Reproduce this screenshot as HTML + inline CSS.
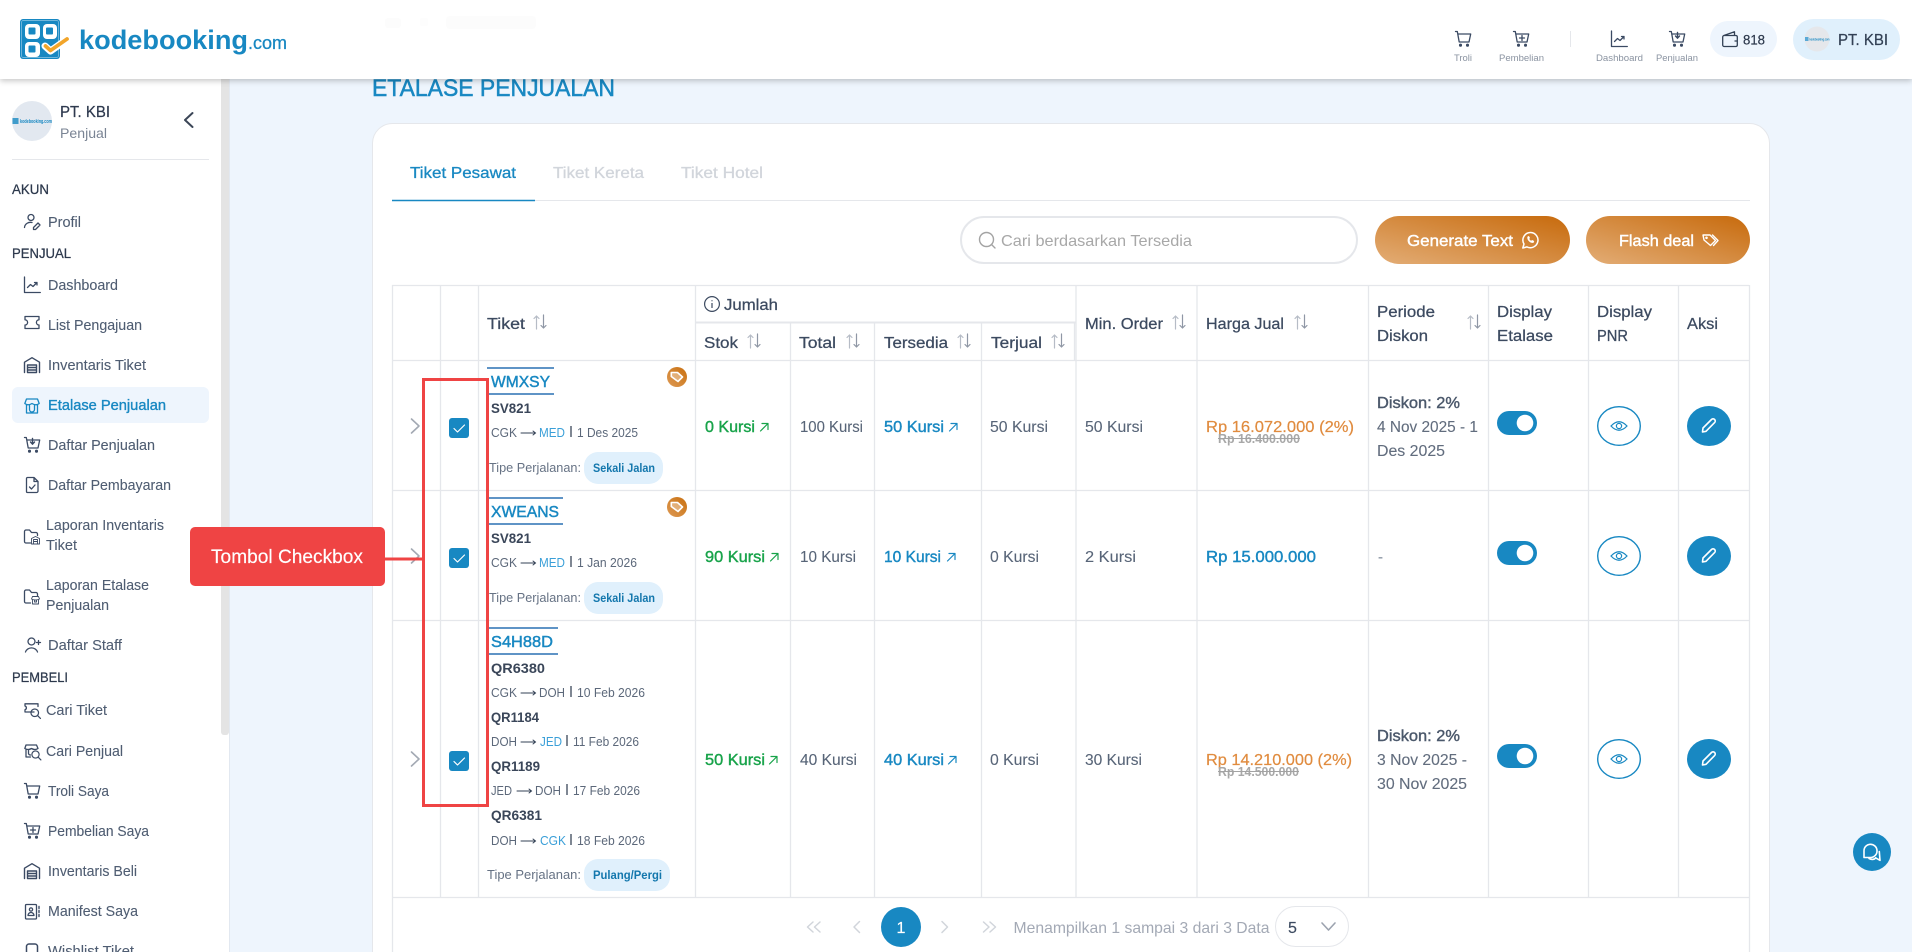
<!DOCTYPE html>
<html lang="id">
<head>
<meta charset="utf-8">
<title>Etalase Penjualan</title>
<style>
html,body{margin:0;padding:0;background:#eef5fd;width:1912px;height:952px;overflow:hidden}
svg{display:block}
text{font-family:"Liberation Sans",sans-serif;white-space:pre}
.ic{fill:none;stroke:#3b4a63;stroke-width:1.3;stroke-linecap:round;stroke-linejoin:round}
.grid line{stroke:#e5e7eb;stroke-width:1.3}
</style>
</head>
<body>
<svg width="1912" height="952" viewBox="0 0 1912 952" xmlns="http://www.w3.org/2000/svg">
<defs>
<linearGradient id="btn" x1="0" y1="1" x2="1" y2="0"><stop offset="0" stop-color="#e3ad76"/><stop offset="1" stop-color="#c76a0c"/></linearGradient>
<linearGradient id="tagc" x1="0" y1="1" x2="1" y2="0"><stop offset="0" stop-color="#dd9a55"/><stop offset="1" stop-color="#c9700f"/></linearGradient>
<filter id="hs" x="-5%" y="-20%" width="110%" height="150%"><feDropShadow dx="0" dy="2" stdDeviation="3" flood-color="#000" flood-opacity=".22"/></filter>
<g id="sort" fill="none" stroke-width="1.2" stroke-linecap="round" stroke-linejoin="round"><path d="M3.5 14V1M1 3.5L3.5 1L6 3.5" stroke="#b6bcc6"/><path d="M10.5 0V13M8 10.5L10.5 13L13 10.5" stroke="#8f97a5"/></g>
<g id="ne" fill="none" stroke-width="1.2" stroke-linecap="round" stroke-linejoin="round"><path d="M.5 8L8 .5M2 .5H8V6.5"/></g>
<g id="arr" fill="none" stroke="#334155" stroke-width="1" stroke-linecap="round"><path d="M0 0H14.5M12 -2L14.5 0L12 2"/></g>
<g id="cart"><path d="M.5 .5H2.3L4.2 11H14L15.7 3H2.8"/><circle cx="5.5" cy="14.2" r=".9" fill="#3b4a63"/><circle cx="12.5" cy="14.2" r=".9" fill="#3b4a63"/></g>
<g id="dash"><path d="M.5 0V15.5H16.3M3.5 10.5L6.5 7.5L9 9.5L13 5.5M10.5 5.5H13V8"/></g>
<g id="tick"><path d="M1 1.5H15V4.8A2.6 2.6 0 0 0 15 10V13.5H1V10A2.6 2.6 0 0 0 1 4.8Z"/></g>
<g id="ware"><path d="M.5 15.5V5.2L8 .7L15.5 5.2V15.5M3.5 15.5V8H12.5V15.5ZM3.5 10.5H12.5M3.5 13H12.5" stroke-width="1.4"/></g>
<g id="shop"><path d="M.8 5.5L2.5 1H13.5L15.2 5.5Q12 8 8 5.5Q4 8 .8 5.5ZM2.5 7V15H13.5V7M5.5 7.5V11.5A2.5 2.5 0 0 0 10.5 11.5V7.5"/></g>
<g id="wt"><circle cx="5" cy="5" r="4"/><path d="M8 8L11 11"/></g>
<g id="pencil" fill="none" stroke="#fff" stroke-width="1.6" stroke-linejoin="round" stroke-linecap="round"><path d="M1.5 15L2 11L10.5 2.5A2.1 2.1 0 0 1 13.6 5.6L5 14.3Z"/></g>
<g id="eye" fill="none" stroke="#1888c2" stroke-width="1.2"><path d="M-8 0Q0 -8.5 8 0Q0 8.5 -8 0Z"/><circle r="2.6"/></g>
<g id="tagi" fill="none" stroke-width="1.4" stroke-linejoin="round" stroke-linecap="round"><path d="M1 2H8L13.5 7.5L8.5 12.5L2 7Z"/><path d="M10.5 2L16 7.5L11.5 12.5"/><circle cx="4.5" cy="4.8" r=".6"/></g>
<g id="tagw"><circle r="10" fill="url(#tagc)"/><g transform="translate(-6.5,-5.5)" fill="none" stroke="#fff" stroke-width="1.6" stroke-linejoin="round"><path d="M.8 1H7L12 5.5L7.5 10L.8 5Z" fill="#fff" fill-opacity=".35"/></g></g>
<g id="cb"><rect width="20" height="20" rx="3" fill="#1888c2"/><path d="M5 10.5L8.5 14L15.5 7" fill="none" stroke="#fff" stroke-width="1.2" stroke-linecap="round" stroke-linejoin="round"/></g>
<g id="chev"><path d="M0 0L7.5 7L0 14" fill="none" stroke="#a3a9b3" stroke-width="1.6" stroke-linecap="round" stroke-linejoin="round"/></g>
</defs>

<!-- main background -->
<rect width="1912" height="952" fill="#eef5fd"/>
<line x1="229.5" y1="0" x2="229.5" y2="952" stroke="#e2e8f0"/>

<!-- title -->
<text x="372" y="96" font-size="24" fill="#1888c2" stroke="#1888c2" stroke-width=".5" textLength="243" lengthAdjust="spacingAndGlyphs">ETALASE PENJUALAN</text>

<!-- card -->
<path d="M372.5 960V143A20 20 0 0 1 392.5 123.5H1750A20 20 0 0 1 1769.5 143V960Z" fill="#fff" stroke="#e5e7eb"/>

<!-- tabs -->
<g font-size="16">
<text x="410" y="178" fill="#1888c2" stroke="#1888c2" stroke-width=".3" textLength="106" lengthAdjust="spacingAndGlyphs">Tiket Pesawat</text>
<text x="553" y="178" fill="#d1d5db" stroke="#d1d5db" stroke-width=".3" textLength="91" lengthAdjust="spacingAndGlyphs">Tiket Kereta</text>
<text x="681" y="178" fill="#d1d5db" stroke="#d1d5db" stroke-width=".3" textLength="82" lengthAdjust="spacingAndGlyphs">Tiket Hotel</text>
</g>
<line x1="392" y1="200.5" x2="1750" y2="200.5" stroke="#e5e7eb"/>
<line x1="392" y1="200.5" x2="535" y2="200.5" stroke="#1888c2" stroke-width="1.4"/>

<!-- search -->
<rect x="961" y="217" width="396" height="46" rx="23" fill="#fff" stroke="#e5e7eb" stroke-width="2"/>
<g fill="none" stroke="#a3a3a3" stroke-width="1.4" stroke-linecap="round"><circle cx="986.5" cy="239.5" r="7"/><path d="M991.5 244.5L995 248"/></g>
<text x="1001" y="246" font-size="16" fill="#a8a8a8" textLength="191" lengthAdjust="spacingAndGlyphs">Cari berdasarkan Tersedia</text>

<!-- buttons -->
<rect x="1375" y="216" width="195" height="48" rx="24" fill="url(#btn)"/>
<text x="1407" y="246" font-size="16" fill="#fff" stroke="#fff" stroke-width=".4" textLength="106" lengthAdjust="spacingAndGlyphs">Generate Text</text>
<g transform="translate(1522,232)" fill="none" stroke="#fff" stroke-width="1.5" stroke-linejoin="round"><path d="M8.7 .5A7.6 7.6 0 1 1 5 14.9L.8 16L2 12A7.6 7.6 0 0 1 8.7 .5Z"/><path d="M5.6 4.8C5 8 8 11.2 11.4 10.6L12 9.2L10 8.2L9.2 9C8.2 8.7 7.3 7.7 7 6.8L7.8 6L6.8 4.2Z" fill="#fff" stroke-width=".5"/></g>
<rect x="1586" y="216" width="164" height="48" rx="24" fill="url(#btn)"/>
<text x="1619" y="246" font-size="16" fill="#fff" stroke="#fff" stroke-width=".4" textLength="75" lengthAdjust="spacingAndGlyphs">Flash deal</text>
<use href="#tagi" x="1702" y="233" stroke="#fff"/>

<!-- table grid -->
<g class="grid">
<line x1="392" y1="285.5" x2="1749" y2="285.5"/>
<line x1="696" y1="322.5" x2="1076" y2="322.5" style="stroke-width:2"/>
<line x1="392" y1="360.5" x2="1749" y2="360.5"/>
<line x1="392" y1="490.5" x2="1749" y2="490.5"/>
<line x1="392" y1="620.5" x2="1749" y2="620.5"/>
<line x1="392" y1="897.5" x2="1749" y2="897.5"/>
<line x1="392.5" y1="285" x2="392.5" y2="952"/>
<line x1="1749.5" y1="285" x2="1749.5" y2="952"/>
<line x1="440.5" y1="285" x2="440.5" y2="897"/>
<line x1="478.5" y1="285" x2="478.5" y2="897"/>
<line x1="695.5" y1="285" x2="695.5" y2="897"/>
<line x1="790.5" y1="323" x2="790.5" y2="897"/>
<line x1="874.5" y1="323" x2="874.5" y2="897"/>
<line x1="981.5" y1="323" x2="981.5" y2="897"/>
<line x1="1074.5" y1="323" x2="1074.5" y2="360"/>
<line x1="1076" y1="285" x2="1076" y2="897"/>
<line x1="1197" y1="285" x2="1197" y2="897"/>
<line x1="1368.5" y1="285" x2="1368.5" y2="897"/>
<line x1="1488.5" y1="285" x2="1488.5" y2="897"/>
<line x1="1588.5" y1="285" x2="1588.5" y2="897"/>
<line x1="1678.5" y1="285" x2="1678.5" y2="897"/>
</g>

<!-- table head -->
<g font-size="15.5" fill="#3c4a60" stroke="#3c4a60" stroke-width=".25">
<text x="487" y="329" textLength="38" lengthAdjust="spacingAndGlyphs">Tiket</text>
<text x="724" y="310" textLength="54" lengthAdjust="spacingAndGlyphs">Jumlah</text>
<text x="704" y="348" textLength="34" lengthAdjust="spacingAndGlyphs">Stok</text>
<text x="799" y="348" textLength="37" lengthAdjust="spacingAndGlyphs">Total</text>
<text x="884" y="348" textLength="64" lengthAdjust="spacingAndGlyphs">Tersedia</text>
<text x="991" y="348" textLength="51" lengthAdjust="spacingAndGlyphs">Terjual</text>
<text x="1085" y="329" textLength="78" lengthAdjust="spacingAndGlyphs">Min. Order</text>
<text x="1206" y="329" textLength="78" lengthAdjust="spacingAndGlyphs">Harga Jual</text>
<text x="1377" y="317" textLength="58" lengthAdjust="spacingAndGlyphs">Periode</text>
<text x="1377" y="341" textLength="51" lengthAdjust="spacingAndGlyphs">Diskon</text>
<text x="1497" y="317" textLength="55" lengthAdjust="spacingAndGlyphs">Display</text>
<text x="1497" y="341" textLength="56" lengthAdjust="spacingAndGlyphs">Etalase</text>
<text x="1597" y="317" textLength="55" lengthAdjust="spacingAndGlyphs">Display</text>
<text x="1597" y="341" textLength="31" lengthAdjust="spacingAndGlyphs">PNR</text>
<text x="1687" y="329" textLength="31" lengthAdjust="spacingAndGlyphs">Aksi</text>
</g>
<g fill="none" stroke="#3c4a60" stroke-width="1.2"><circle cx="712" cy="304" r="7.4"/><path d="M712 303V308M712 300.2V301.2"/></g>
<use href="#sort" x="533" y="315"/><use href="#sort" x="747" y="334"/><use href="#sort" x="846" y="334"/><use href="#sort" x="957" y="334"/><use href="#sort" x="1051" y="334"/><use href="#sort" x="1172" y="315"/><use href="#sort" x="1294" y="315"/><use href="#sort" x="1467" y="315"/>

<!-- expanders and checks -->
<use href="#chev" x="411.5" y="419"/><use href="#chev" x="411.5" y="549"/><use href="#chev" x="411.5" y="752"/>
<use href="#cb" x="449" y="418"/><use href="#cb" x="449" y="548"/><use href="#cb" x="449" y="751"/>

<!-- booking codes -->
<g stroke="#2a70b4" stroke-width="1.5">
<line x1="487" y1="368" x2="554" y2="368"/><line x1="487" y1="394" x2="554" y2="394"/>
<line x1="489" y1="498" x2="563" y2="498"/><line x1="489" y1="524" x2="563" y2="524"/>
<line x1="489" y1="628" x2="558" y2="628"/><line x1="489" y1="654" x2="558" y2="654"/>
</g>
<g font-size="16" fill="#1888c2" stroke="#1888c2" stroke-width=".45">
<text x="491" y="387" textLength="59" lengthAdjust="spacingAndGlyphs">WMXSY</text>
<text x="491" y="517" textLength="68" lengthAdjust="spacingAndGlyphs">XWEANS</text>
<text x="491" y="647" textLength="62" lengthAdjust="spacingAndGlyphs">S4H88D</text>
</g>
<use href="#tagw" x="677" y="377"/><use href="#tagw" x="677" y="507"/>

<!-- flight numbers -->
<g font-size="14" font-weight="700" fill="#3a4659">
<text x="491" y="413" textLength="40" lengthAdjust="spacingAndGlyphs">SV821</text>
<text x="491" y="543" textLength="40" lengthAdjust="spacingAndGlyphs">SV821</text>
<text x="491" y="673" textLength="54" lengthAdjust="spacingAndGlyphs">QR6380</text>
<text x="491" y="722" textLength="48" lengthAdjust="spacingAndGlyphs">QR1184</text>
<text x="491" y="771" textLength="49" lengthAdjust="spacingAndGlyphs">QR1189</text>
<text x="491" y="820" textLength="51" lengthAdjust="spacingAndGlyphs">QR6381</text>
</g>

<!-- routes -->
<g font-size="13" fill="#5c687a">
<text x="491" y="437" textLength="26" lengthAdjust="spacingAndGlyphs">CGK</text><text x="539" y="437" fill="#3a9fd8" textLength="26" lengthAdjust="spacingAndGlyphs">MED</text><text x="577" y="437" textLength="61" lengthAdjust="spacingAndGlyphs">1 Des 2025</text>
<text x="491" y="567" textLength="26" lengthAdjust="spacingAndGlyphs">CGK</text><text x="539" y="567" fill="#3a9fd8" textLength="26" lengthAdjust="spacingAndGlyphs">MED</text><text x="577" y="567" textLength="60" lengthAdjust="spacingAndGlyphs">1 Jan 2026</text>
<text x="491" y="697" textLength="26" lengthAdjust="spacingAndGlyphs">CGK</text><text x="539" y="697" textLength="26" lengthAdjust="spacingAndGlyphs">DOH</text><text x="577" y="697" textLength="68" lengthAdjust="spacingAndGlyphs">10 Feb 2026</text>
<text x="491" y="746" textLength="26" lengthAdjust="spacingAndGlyphs">DOH</text><text x="540" y="746" fill="#3a9fd8" textLength="22" lengthAdjust="spacingAndGlyphs">JED</text><text x="573" y="746" textLength="66" lengthAdjust="spacingAndGlyphs">11 Feb 2026</text>
<text x="491" y="795" textLength="21" lengthAdjust="spacingAndGlyphs">JED</text><text x="535" y="795" textLength="26" lengthAdjust="spacingAndGlyphs">DOH</text><text x="573" y="795" textLength="67" lengthAdjust="spacingAndGlyphs">17 Feb 2026</text>
<text x="491" y="845" textLength="26" lengthAdjust="spacingAndGlyphs">DOH</text><text x="540" y="845" fill="#3a9fd8" textLength="26" lengthAdjust="spacingAndGlyphs">CGK</text><text x="577" y="845" textLength="68" lengthAdjust="spacingAndGlyphs">18 Feb 2026</text>
<text x="489" y="472" fill="#667284" textLength="92" lengthAdjust="spacingAndGlyphs">Tipe Perjalanan:</text>
<text x="489" y="602" fill="#667284" textLength="92" lengthAdjust="spacingAndGlyphs">Tipe Perjalanan:</text>
<text x="487" y="879" fill="#667284" textLength="94" lengthAdjust="spacingAndGlyphs">Tipe Perjalanan:</text>
</g>
<use href="#arr" x="521" y="433"/><use href="#arr" x="521" y="563"/><use href="#arr" x="521" y="693"/><use href="#arr" x="521" y="742"/><use href="#arr" x="517" y="791"/><use href="#arr" x="521" y="841"/>
<g stroke="#3a4659" stroke-width="1.3">
<line x1="571" y1="426" x2="571" y2="437"/><line x1="571" y1="556" x2="571" y2="567"/><line x1="571" y1="686" x2="571" y2="697"/><line x1="567" y1="735" x2="567" y2="746"/><line x1="567" y1="784" x2="567" y2="795"/><line x1="571" y1="834" x2="571" y2="845"/>
</g>

<!-- type badges -->
<rect x="584" y="452" width="79" height="32" rx="14" fill="#e0f0fc"/>
<rect x="584" y="582" width="79" height="32" rx="14" fill="#e0f0fc"/>
<rect x="584" y="859" width="86" height="32" rx="14" fill="#e0f0fc"/>
<g font-size="11.5" font-weight="700" fill="#1377ad">
<text x="593" y="472" textLength="62" lengthAdjust="spacingAndGlyphs">Sekali Jalan</text>
<text x="593" y="602" textLength="62" lengthAdjust="spacingAndGlyphs">Sekali Jalan</text>
<text x="593" y="879" textLength="69" lengthAdjust="spacingAndGlyphs">Pulang/Pergi</text>
</g>

<!-- stock -->
<g font-size="15.5" fill="#18a34a" stroke="#18a34a" stroke-width=".4">
<text x="705" y="432" textLength="50" lengthAdjust="spacingAndGlyphs">0 Kursi</text>
<text x="705" y="562" textLength="60" lengthAdjust="spacingAndGlyphs">90 Kursi</text>
<text x="705" y="765" textLength="60" lengthAdjust="spacingAndGlyphs">50 Kursi</text>
</g>
<use href="#ne" x="760" y="423" stroke="#18a34a"/><use href="#ne" x="770" y="553" stroke="#18a34a"/><use href="#ne" x="769" y="756" stroke="#18a34a"/>

<g font-size="15.5" fill="#586578" stroke="#586578" stroke-width=".1">
<text x="800" y="432" textLength="63" lengthAdjust="spacingAndGlyphs">100 Kursi</text>
<text x="800" y="562" textLength="56" lengthAdjust="spacingAndGlyphs">10 Kursi</text>
<text x="800" y="765" textLength="57" lengthAdjust="spacingAndGlyphs">40 Kursi</text>
<text x="990" y="432" textLength="58" lengthAdjust="spacingAndGlyphs">50 Kursi</text>
<text x="990" y="562" textLength="49" lengthAdjust="spacingAndGlyphs">0 Kursi</text>
<text x="990" y="765" textLength="49" lengthAdjust="spacingAndGlyphs">0 Kursi</text>
<text x="1085" y="432" textLength="58" lengthAdjust="spacingAndGlyphs">50 Kursi</text>
<text x="1085" y="562" textLength="51" lengthAdjust="spacingAndGlyphs">2 Kursi</text>
<text x="1085" y="765" textLength="57" lengthAdjust="spacingAndGlyphs">30 Kursi</text>
<text x="1378" y="562" textLength="5" lengthAdjust="spacingAndGlyphs" fill="#8a94a3">-</text>
</g>
<g font-size="15.5" fill="#1888c2" stroke="#1888c2" stroke-width=".4">
<text x="884" y="432" textLength="60" lengthAdjust="spacingAndGlyphs">50 Kursi</text>
<text x="884" y="562" textLength="57" lengthAdjust="spacingAndGlyphs">10 Kursi</text>
<text x="884" y="765" textLength="60" lengthAdjust="spacingAndGlyphs">40 Kursi</text>
<text x="1206" y="562" textLength="110" lengthAdjust="spacingAndGlyphs">Rp 15.000.000</text>
</g>
<use href="#ne" x="949" y="423" stroke="#1888c2"/><use href="#ne" x="947" y="553" stroke="#1888c2"/><use href="#ne" x="948" y="756" stroke="#1888c2"/>

<!-- prices -->
<g font-size="16" fill="#e08b3e" stroke="#e08b3e" stroke-width=".2">
<text x="1206" y="432" textLength="148" lengthAdjust="spacingAndGlyphs">Rp 16.072.000 (2%)</text>
<text x="1206" y="765" textLength="146" lengthAdjust="spacingAndGlyphs">Rp 14.210.000 (2%)</text>
</g>
<g font-size="13" font-weight="700" fill="#a8a8a8">
<text x="1218" y="443" textLength="82" lengthAdjust="spacingAndGlyphs">Rp 16.400.000</text>
<text x="1218" y="776" textLength="81" lengthAdjust="spacingAndGlyphs">Rp 14.500.000</text>
</g>
<line x1="1218" y1="438.5" x2="1300" y2="438.5" stroke="#a3a3a3"/><line x1="1218" y1="771.5" x2="1299" y2="771.5" stroke="#a3a3a3"/>

<!-- discount -->
<g font-size="15.5" fill="#4b586b" stroke="#4b586b" stroke-width=".4">
<text x="1377" y="408" textLength="83" lengthAdjust="spacingAndGlyphs">Diskon: 2%</text>
<text x="1377" y="741" textLength="83" lengthAdjust="spacingAndGlyphs">Diskon: 2%</text>
</g>
<g font-size="15.5" fill="#626d7e" stroke="#626d7e" stroke-width=".1">
<text x="1377" y="432" textLength="101" lengthAdjust="spacingAndGlyphs">4 Nov 2025 - 1</text>
<text x="1377" y="456" textLength="68" lengthAdjust="spacingAndGlyphs">Des 2025</text>
<text x="1377" y="765" textLength="90" lengthAdjust="spacingAndGlyphs">3 Nov 2025 -</text>
<text x="1377" y="789" textLength="90" lengthAdjust="spacingAndGlyphs">30 Nov 2025</text>
</g>

<!-- toggles -->
<rect x="1497" y="411" width="40" height="24" rx="12" fill="#1888c2"/><circle cx="1525" cy="423" r="8.3" fill="#fff"/>
<rect x="1497" y="541" width="40" height="24" rx="12" fill="#1888c2"/><circle cx="1525" cy="553" r="8.3" fill="#fff"/>
<rect x="1497" y="744" width="40" height="24" rx="12" fill="#1888c2"/><circle cx="1525" cy="756" r="8.3" fill="#fff"/>

<!-- eye buttons -->
<ellipse cx="1619" cy="426" rx="21.3" ry="19.3" fill="#fff" stroke="#1888c2" stroke-width="1.4"/><use href="#eye" x="1619" y="426"/>
<ellipse cx="1619" cy="556" rx="21.3" ry="19.3" fill="#fff" stroke="#1888c2" stroke-width="1.4"/><use href="#eye" x="1619" y="556"/>
<ellipse cx="1619" cy="759" rx="21.3" ry="19.3" fill="#fff" stroke="#1888c2" stroke-width="1.4"/><use href="#eye" x="1619" y="759"/>

<!-- edit buttons -->
<ellipse cx="1709" cy="426" rx="22" ry="20" fill="#1888c2"/><use href="#pencil" x="1701" y="417"/>
<ellipse cx="1709" cy="556" rx="22" ry="20" fill="#1888c2"/><use href="#pencil" x="1701" y="547"/>
<ellipse cx="1709" cy="759" rx="22" ry="20" fill="#1888c2"/><use href="#pencil" x="1701" y="750"/>

<!-- pagination -->
<g fill="none" stroke-width="1.5" stroke-linecap="round" stroke-linejoin="round" stroke="#d1d5db">
<path d="M813 922L807.5 927L813 932M820 922L814.5 927L820 932"/>
<path d="M859.5 921.5L854 927L859.5 932.5"/>
<path d="M942 921.5L947.5 927L942 932.5"/>
<path d="M983.5 922L989 927L983.5 932M990 922L995.5 927L990 932"/>
</g>
<circle cx="901" cy="927" r="20" fill="#1888c2"/>
<text x="901" y="933" font-size="16" fill="#fff" stroke="#fff" stroke-width=".2" text-anchor="middle">1</text>
<text x="1013.5" y="933" font-size="16" fill="#a3a9b5" textLength="256" lengthAdjust="spacingAndGlyphs">Menampilkan 1 sampai 3 dari 3 Data</text>
<rect x="1275.5" y="906.5" width="73" height="40" rx="20" fill="#fff" stroke="#e5e7eb"/>
<text x="1288" y="933" font-size="16" fill="#3c4a60" stroke="#3c4a60" stroke-width=".15">5</text>
<path d="M1322 923L1328.5 930L1335 923" fill="none" stroke="#9ca3af" stroke-width="1.6" stroke-linecap="round" stroke-linejoin="round"/>

<!-- chat -->
<circle cx="1872" cy="852" r="19" fill="#1888c2"/>
<g fill="none" stroke="#fff" stroke-width="1.6" stroke-linejoin="round" stroke-linecap="round"><path d="M1864 857.5V851A6.5 6.5 0 0 1 1877 850.5A6.5 6.5 0 0 1 1870 857.5Z"/><path d="M1875.5 857.8L1880 860.3L1879.3 851.5M1869 858.5Q1873 860.5 1876 858"/></g>

<!-- sidebar -->
<rect x="0" y="0" width="229" height="952" fill="#fff"/>
<rect x="221" y="72" width="8" height="663" rx="3" fill="#e4e4e4"/>
<circle cx="32" cy="121" r="20" fill="#e2e8f0"/>
<rect x="12.5" y="118" width="6" height="6" fill="#1888c2" opacity=".8"/>
<text x="20" y="123" font-size="5" font-weight="700" fill="#1888c2" textLength="32" lengthAdjust="spacingAndGlyphs">kodebooking.com</text>
<text x="60" y="117" font-size="16" fill="#2f3a4f" stroke="#2f3a4f" stroke-width=".25" textLength="50" lengthAdjust="spacingAndGlyphs">PT. KBI</text>
<text x="60" y="138" font-size="14" fill="#7a8494" textLength="47" lengthAdjust="spacingAndGlyphs">Penjual</text>
<path d="M192.5 113L185 120L192.5 127" fill="none" stroke="#3b4657" stroke-width="2" stroke-linecap="round" stroke-linejoin="round"/>
<line x1="12" y1="159.5" x2="209" y2="159.5" stroke="#e5e7eb"/>
<rect x="12" y="387" width="197" height="36" rx="6" fill="#eef5fd"/>

<g font-size="14" fill="#2c384c" stroke="#2c384c" stroke-width=".25">
<text x="12" y="194" textLength="37" lengthAdjust="spacingAndGlyphs">AKUN</text>
<text x="12" y="258" textLength="59" lengthAdjust="spacingAndGlyphs">PENJUAL</text>
<text x="12" y="682" textLength="56" lengthAdjust="spacingAndGlyphs">PEMBELI</text>
</g>
<g font-size="14.5" fill="#4f5d72" stroke="#4f5d72" stroke-width=".1">
<text x="48" y="227" textLength="33" lengthAdjust="spacingAndGlyphs">Profil</text>
<text x="48" y="290" textLength="70" lengthAdjust="spacingAndGlyphs">Dashboard</text>
<text x="48" y="330" textLength="94" lengthAdjust="spacingAndGlyphs">List Pengajuan</text>
<text x="48" y="370" textLength="98" lengthAdjust="spacingAndGlyphs">Inventaris Tiket</text>
<text x="48" y="450" textLength="107" lengthAdjust="spacingAndGlyphs">Daftar Penjualan</text>
<text x="48" y="490" textLength="123" lengthAdjust="spacingAndGlyphs">Daftar Pembayaran</text>
<text x="46" y="530" textLength="118" lengthAdjust="spacingAndGlyphs">Laporan Inventaris</text>
<text x="46" y="550" textLength="31" lengthAdjust="spacingAndGlyphs">Tiket</text>
<text x="46" y="590" textLength="103" lengthAdjust="spacingAndGlyphs">Laporan Etalase</text>
<text x="46" y="610" textLength="63" lengthAdjust="spacingAndGlyphs">Penjualan</text>
<text x="48" y="650" textLength="74" lengthAdjust="spacingAndGlyphs">Daftar Staff</text>
<text x="46" y="715" textLength="61" lengthAdjust="spacingAndGlyphs">Cari Tiket</text>
<text x="46" y="756" textLength="77" lengthAdjust="spacingAndGlyphs">Cari Penjual</text>
<text x="48" y="796" textLength="61" lengthAdjust="spacingAndGlyphs">Troli Saya</text>
<text x="48" y="836" textLength="101" lengthAdjust="spacingAndGlyphs">Pembelian Saya</text>
<text x="48" y="876" textLength="89" lengthAdjust="spacingAndGlyphs">Inventaris Beli</text>
<text x="48" y="916" textLength="90" lengthAdjust="spacingAndGlyphs">Manifest Saya</text>
<text x="48" y="956" textLength="86" lengthAdjust="spacingAndGlyphs">Wishlist Tiket</text>
</g>
<text x="48" y="410" font-size="14.5" fill="#1888c2" stroke="#1888c2" stroke-width=".35" textLength="118" lengthAdjust="spacingAndGlyphs">Etalase Penjualan</text>

<!-- sidebar icons -->
<g class="ic">
<g transform="translate(24,214)"><circle cx="7" cy="3.5" r="3"/><path d="M.5 13.5A6 5.5 0 0 1 8 8.5M9.5 13.5L14 9L16 11L11.5 15.5H9.5Z"/></g>
<use href="#dash" x="24" y="277"/>
<use href="#tick" x="24" y="315"/>
<use href="#ware" x="24" y="357"/>
<use href="#shop" x="24" y="398" style="stroke:#1888c2"/>
<g transform="translate(24,437)"><use href="#cart"/><path d="M8.5 1.5V7M6.5 5L8.5 7.2L10.5 5" stroke-width="1.4"/></g>
<g transform="translate(26,477)"><path d="M1.5 .5H8L12 4.5V14A1.5 1.5 0 0 1 10.5 15.5H1.5A1 1 0 0 1 .5 14.5V1.5A1 1 0 0 1 1.5 .5ZM8 .5V4.5H12M3.5 10L5.5 12L9 8"/></g>
<g transform="translate(24,529)"><path d="M6.5 14H2A1.5 1.5 0 0 1 .5 12.5V2.5A1.5 1.5 0 0 1 2 1H5.5L7.5 3.5H12A1.5 1.5 0 0 1 13.5 5V6.5"/><path d="M7.5 15V9.5L11.5 7.5L15.5 9.5V15ZM9.5 10.5H13.5V15H9.5ZM9.5 12.5H13.5" stroke-width=".9"/></g>
<g transform="translate(24,589)"><path d="M6.5 14H2A1.5 1.5 0 0 1 .5 12.5V2.5A1.5 1.5 0 0 1 2 1H5.5L7.5 3.5H12A1.5 1.5 0 0 1 13.5 5V6.5"/><path d="M7.5 10L8.5 7.5H14.5L15.5 10Q11.5 12 7.5 10ZM8.5 11V15H14.5V11M10.5 11V13H12.5V11" stroke-width=".9"/></g>
<g transform="translate(25,637)"><circle cx="6.5" cy="4.5" r="3.5"/><path d="M.5 15A6.2 5.5 0 0 1 12.5 15M13.5 3.5V7.5M11.5 5.5H15.5"/></g>
<g transform="translate(24,703)"><path d="M10 9H1V6.8A2 2 0 0 0 1 3V.8H14V3.5"/><g transform="translate(6,5) scale(.95)"><use href="#wt"/></g></g>
<g transform="translate(24,744)"><path d="M.8 4.5L2 1H12.5L14 4.5Q11 6.5 7.5 4.5Q4 6.5 .8 4.5ZM2 6V13H6.5M4.5 6V9.5A2 2 0 0 0 6.5 11"/><g transform="translate(7,6) scale(.9)"><use href="#wt"/></g></g>
<use href="#cart" x="24" y="783"/>
<g transform="translate(24,823)"><use href="#cart"/><path d="M9 4.5V9.5M6.5 7H11.5"/></g>
<use href="#ware" x="24" y="863"/>
<g transform="translate(25,904)"><rect x=".5" y=".5" width="11" height="14.5" rx="1"/><circle cx="6" cy="5.5" r="1.6"/><path d="M3 11.5A3 3 0 0 1 9 11.5Z"/><path d="M14 2.5V4.5M14 6.5V8.5M14 10.5V12.5" stroke-width="1.4"/></g>
<rect x="26.5" y="944" width="11" height="12" rx="2.5" stroke-width="1.5"/>
</g>

<!-- annotation -->
<rect x="423.5" y="379.5" width="64" height="426" fill="none" stroke="#ef4444" stroke-width="3"/>
<line x1="385" y1="559" x2="423" y2="559" stroke="#ef4444" stroke-width="3"/>
<rect x="190" y="527" width="195" height="59" rx="5" fill="#ef4444"/>
<text x="211" y="563" font-size="19" fill="#fff" stroke="#fff" stroke-width=".15" textLength="152" lengthAdjust="spacingAndGlyphs">Tombol Checkbox</text>

<!-- header -->
<rect x="0" y="0" width="1912" height="79" fill="#fff" filter="url(#hs)"/>
<rect x="385" y="18" width="16" height="10" rx="3" fill="#fcfcfc"/><rect x="420" y="18" width="8" height="8" rx="2" fill="#fdfdfd"/><rect x="446" y="16" width="90" height="13" rx="4" fill="#fcfcfc"/>

<!-- logo -->
<rect x="20" y="19" width="40" height="40" rx="3" fill="#1888c2"/>
<rect x="21.5" y="20.5" width="37" height="37" rx="2" fill="none" stroke="#8fc6e4" stroke-width=".7"/>
<g fill="#fff"><rect x="25" y="24" width="15" height="15" rx="4"/><rect x="43" y="24" width="14" height="15" rx="4"/><rect x="25" y="42" width="15" height="15" rx="4"/></g>
<g fill="#1888c2"><rect x="28.5" y="27.5" width="7" height="7" rx="1"/><rect x="46" y="27.5" width="7" height="7" rx="1"/><rect x="28.5" y="45.5" width="7" height="7" rx="1"/></g>
<path d="M45 46L50.5 51L67.5 39" fill="none" stroke="#fff" stroke-width="7" stroke-linecap="round" stroke-linejoin="round"/>
<path d="M45.5 46L50.5 50.5L67 39" fill="none" stroke="#f2a52a" stroke-width="3.8" stroke-linecap="round" stroke-linejoin="round"/>
<text x="79" y="49" font-size="27" font-weight="700" fill="#1888c2" textLength="169" lengthAdjust="spacingAndGlyphs">kodebooking</text>
<text x="248" y="49" font-size="18" fill="#1888c2" stroke="#1888c2" stroke-width=".3" textLength="39" lengthAdjust="spacingAndGlyphs">.com</text>

<!-- header right -->
<g class="ic">
<use href="#cart" x="1455" y="31"/>
<g transform="translate(1513,31)"><use href="#cart"/><path d="M9 4.5V9.5M6.5 7H11.5"/></g>
<use href="#dash" x="1611" y="31"/>
<g transform="translate(1669,31)"><use href="#cart"/><path d="M8.5 1.5V7M6.5 5L8.5 7.2L10.5 5" stroke-width="1.4"/></g>
</g>
<line x1="1570.5" y1="31" x2="1570.5" y2="47" stroke="#e5e7eb"/>
<g font-size="9.5" fill="#8a93a1">
<text x="1454" y="61" textLength="18" lengthAdjust="spacingAndGlyphs">Troli</text>
<text x="1499" y="61" textLength="45" lengthAdjust="spacingAndGlyphs">Pembelian</text>
<text x="1596" y="61" textLength="47" lengthAdjust="spacingAndGlyphs">Dashboard</text>
<text x="1656" y="61" textLength="42" lengthAdjust="spacingAndGlyphs">Penjualan</text>
</g>
<rect x="1710" y="21" width="67" height="36" rx="18" fill="#eef5fd"/>
<g transform="translate(1722,31)" fill="none" stroke="#334155" stroke-width="1.3" stroke-linejoin="round" stroke-linecap="round"><path d="M.7 6A1.5 1.5 0 0 1 2.2 4.5H14A1.5 1.5 0 0 1 15.3 6V14A1.5 1.5 0 0 1 14 15.5H2.2A1.5 1.5 0 0 1 .7 14ZM1.5 4.6L12.5 .8V4.5M13 10H15.3"/></g>
<text x="1743" y="44.5" font-size="14" fill="#2c384c" stroke="#2c384c" stroke-width=".2" textLength="22" lengthAdjust="spacingAndGlyphs">818</text>
<rect x="1793" y="19" width="107" height="41" rx="20.5" fill="#e0f0fc"/>
<circle cx="1817" cy="39" r="12.5" fill="#e5e7eb"/>
<rect x="1805" y="37" width="3.5" height="4" fill="#5aa9d6"/>
<text x="1809.5" y="40.5" font-size="3.5" font-weight="700" fill="#1888c2" textLength="20" lengthAdjust="spacingAndGlyphs">kodebooking.com</text>
<text x="1838" y="45" font-size="16" fill="#334155" stroke="#334155" stroke-width=".25" textLength="50" lengthAdjust="spacingAndGlyphs">PT. KBI</text>
</svg>
</body>
</html>
